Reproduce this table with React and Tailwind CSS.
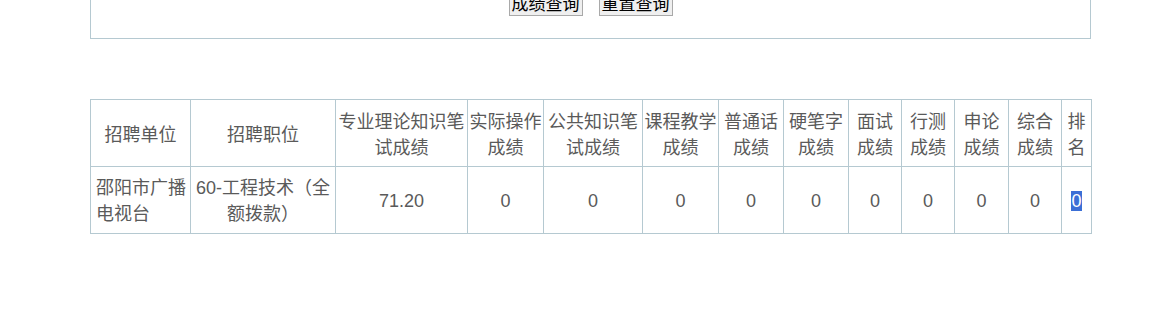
const columns = [
  { title: "招聘单位", width: "w-[100px]" },
  { title: "招聘职位", width: "w-[145px]" },
  { title: "专业理论知识笔试成绩", width: "w-[132px]" },
  { title: "实际操作成绩", width: "w-[76px]" },
  { title: "公共知识笔试成绩", width: "w-[99px]" },
  { title: "课程教学成绩", width: "w-[76px]" },
  { title: "普通话成绩", width: "w-[65px]" },
  { title: "硬笔字成绩", width: "w-[65px]" },
  { title: "面试成绩", width: "w-[53px]" },
  { title: "行测成绩", width: "w-[53px]" },
  { title: "申论成绩", width: "w-[54px]" },
  { title: "综合成绩", width: "w-[53px]" },
  { title: "排名", width: "w-[30px]" },
];

const result = ["邵阳市广播电视台", "60-工程技术（全额拨款）", "71.20", "0", "0", "0", "0", "0", "0", "0", "0", "0"];

const cell = "border border-[#b5c9d1] px-0 text-center align-middle";

export default function App() {
  return (
    <div className="min-h-[311px] bg-white font-['Liberation_Sans','Noto_Sans_CJK_SC',sans-serif] text-[18px] leading-[26px] text-[#5a5a5a]">
      {/* query form box (top edge scrolled away) */}
      <div className="ml-[90px] -mt-[21px] h-[60px] w-[1001px] border border-[#b5c9d1] pt-[13px]">
        <div className="flex justify-center gap-[16px]">
          <button className="h-[23px] border border-[#a9a9a9] bg-[#efefef] px-[2px] text-[17px] leading-[21px] text-black">
            成绩查询
          </button>
          <button className="h-[23px] border border-[#a9a9a9] bg-[#efefef] px-[2px] text-[17px] leading-[21px] text-black">
            重置查询
          </button>
        </div>
      </div>

      {/* score table */}
      <table className="ml-[90px] mt-[60px] w-[1001px] table-fixed border-collapse">
        <thead>
          <tr className="h-[67px]">
            {columns.map((c) => (
              <th key={c.title} className={`${cell} ${c.width} pt-[4px] font-normal`}>
                {c.title}
              </th>
            ))}
          </tr>
        </thead>
        <tbody>
          <tr className="h-[67px]">
            {result.map((v, i) => (
              <td key={i} className={i === 0 ? `${cell} pt-[2px] pl-[5px] text-left` : `${cell} pt-[2px]`}>
                {v}
              </td>
            ))}
            <td className={`${cell} pt-[2px]`}>
              <span className="bg-[#3b6fd6] text-white">0</span>
            </td>
          </tr>
        </tbody>
      </table>
    </div>
  );
}
